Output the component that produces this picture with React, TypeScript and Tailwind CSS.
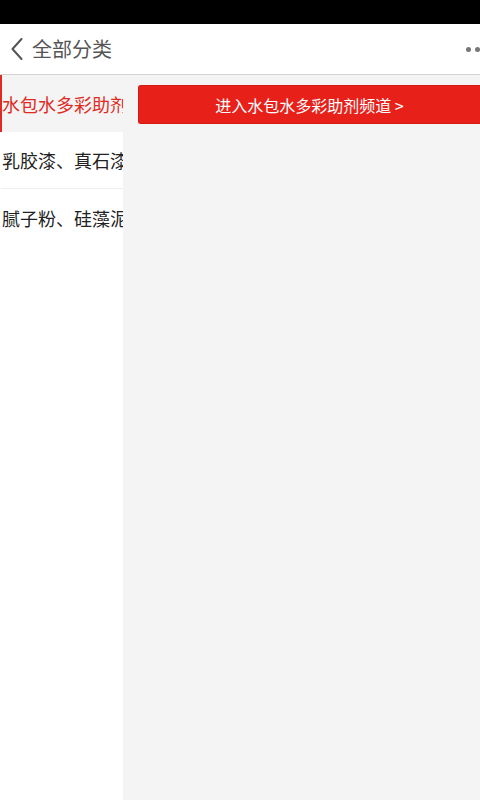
const categories = ["水包水多彩助剂", "乳胶漆、真石漆", "腻子粉、硅藻泥"];

function BackIcon() {
  return (
    <svg width="12" height="22" viewBox="0 0 12 22" fill="none">
      <path d="M10.5 1 L1.5 11 L10.5 21" stroke="#555555" strokeWidth="2" strokeLinecap="round" strokeLinejoin="round" />
    </svg>
  );
}

export default function App() {
  const active = 0;

  return (
    <div
      className="h-[800px] w-full flex flex-col overflow-hidden bg-white"
      style={{ fontFamily: '"Noto Sans CJK SC", "Noto Sans", sans-serif' }}
    >
      {/* status bar */}
      <div className="h-[24px] bg-black shrink-0" />

      {/* header */}
      <div className="h-[51px] shrink-0 flex items-center bg-white border-b border-[#d4d4d4] overflow-hidden">
        <div className="pl-[11px] pr-[9px] flex items-center">
          <BackIcon />
        </div>
        <span className="text-[20px] text-[#555555] leading-none">全部分类</span>
        <div className="ml-auto flex items-center gap-[4px] -mr-[9px]">
          <span className="w-[5px] h-[5px] rounded-full bg-[#777777]" />
          <span className="w-[5px] h-[5px] rounded-full bg-[#777777]" />
          <span className="w-[5px] h-[5px] rounded-full bg-[#777777]" />
        </div>
      </div>

      <div className="flex flex-1 min-h-0">
        {/* category list */}
        <div className="w-[123px] shrink-0 bg-white overflow-hidden">
          {categories.map((name, i) => (
            <div
              key={name}
              className={
                i === active
                  ? "h-[57px] flex items-center border-l-2 border-[#e02b24] bg-[#f4f4f4] whitespace-nowrap"
                  : i === categories.length - 1
                  ? "h-[57px] flex items-center border-l-2 border-transparent whitespace-nowrap"
                  : "h-[57px] flex items-center border-l-2 border-transparent border-b border-b-[#eeeeee] whitespace-nowrap"
              }
            >
              <span
                className={
                  i === active
                    ? "text-[18px] text-[#e02b24] leading-none"
                    : "text-[18px] text-[#222222] leading-none"
                }
              >
                {name}
              </span>
            </div>
          ))}
        </div>

        {/* channel panel */}
        <div className="flex-1 bg-[#f4f4f4] pt-[10px] pl-[15px]">
          <button className="w-full h-[39px] rounded-l-[3px] bg-[#e8201a] border border-[#d41a14] border-r-0 text-white text-[16px] flex items-center justify-center">
            进入水包水多彩助剂频道 &gt;
          </button>
        </div>
      </div>
    </div>
  );
}
